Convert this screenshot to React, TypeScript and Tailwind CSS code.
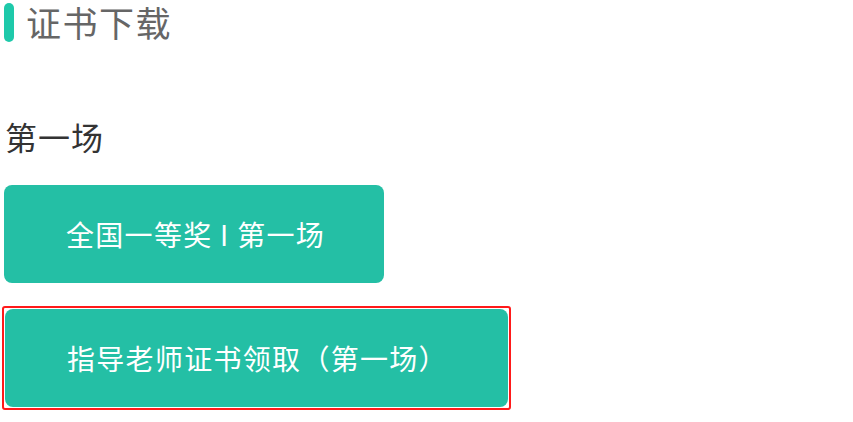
const cjk = "font-['Noto_Sans_CJK_SC','Noto_Sans',sans-serif]";

const CertButton = ({ label, width }: { label: string; width: string }) => (
  <button
    className={`${width} h-[98px] rounded-lg bg-[#24bfa5] pl-[62px] text-left text-[28px] leading-[40px] tracking-[1.3px] text-white ${cjk}`}
  >
    {label}
  </button>
);

const App = () => {
  return (
    <div className={`h-[422px] w-[853px] bg-white ${cjk}`}>
      {/* section header */}
      <div className="flex h-[44px] items-center gap-[12px] pl-1">
        <span className="h-[39px] w-[10px] rounded-full bg-[#1ec9aa]" />
        <span className="text-[35px] leading-[44px] tracking-[1.5px] text-[#666666]">证书下载</span>
      </div>

      <h2 className="mt-[72px] pl-[5px] text-[32px] leading-[40px] tracking-[1px] text-[#333333]">第一场</h2>

      <div className="mt-[29px] flex flex-col items-start">
        <div className="pl-1">
          <CertButton label="全国一等奖 I 第一场" width="w-[380px]" />
        </div>
        <div className="ml-[2px] mt-[23px] rounded-[3px] border-2 border-[#ff1a1a] p-px">
          <CertButton label="指导老师证书领取（第一场）" width="w-[503px]" />
        </div>
      </div>
    </div>
  );
};

export default App;
